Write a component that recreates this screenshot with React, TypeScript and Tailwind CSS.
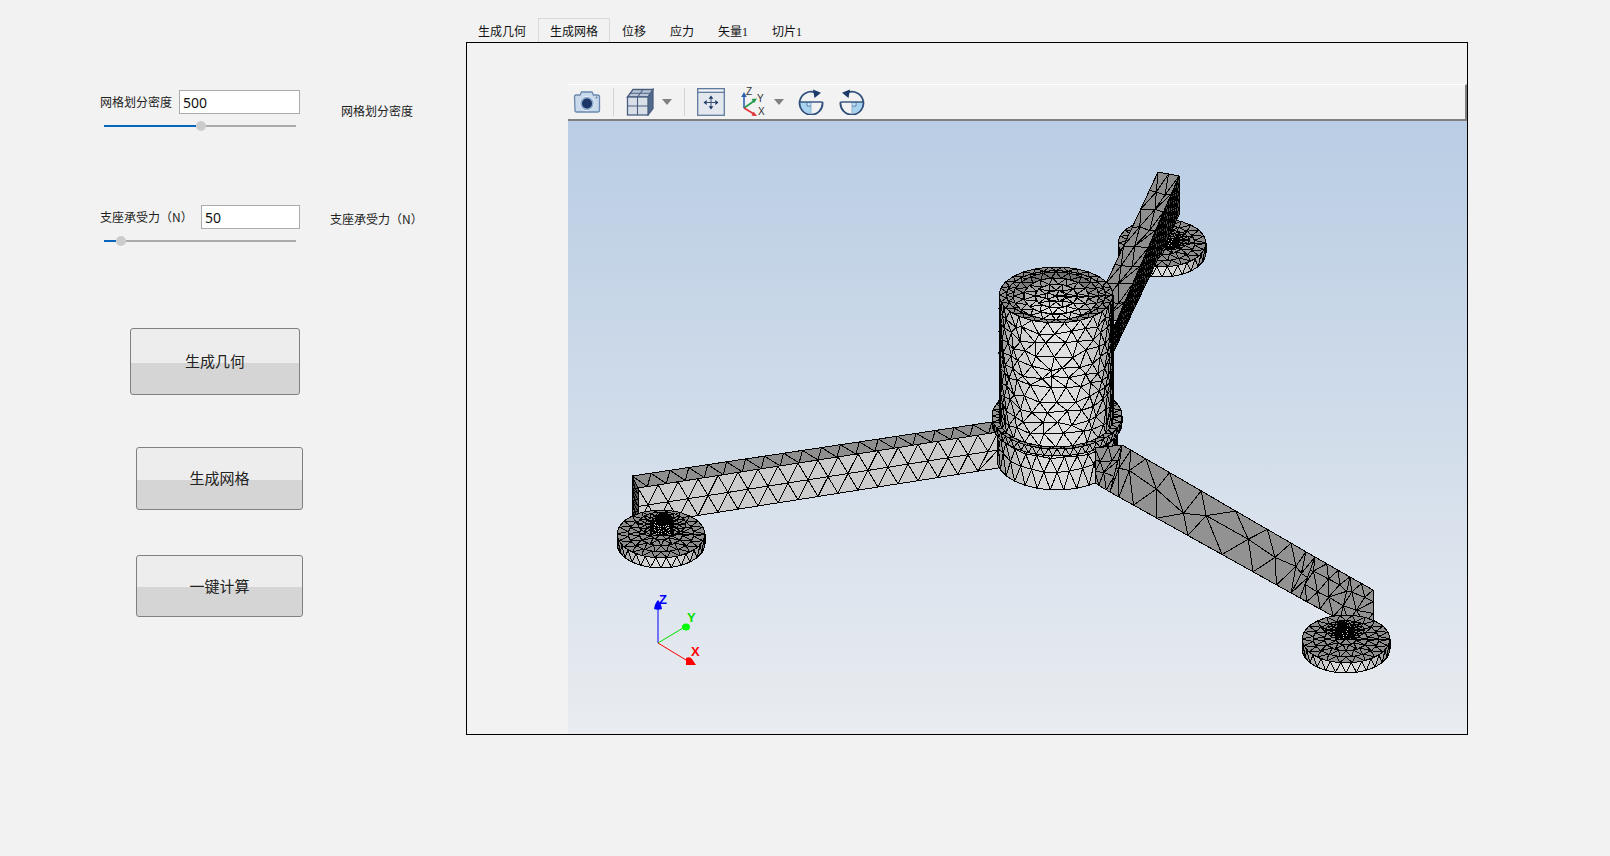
type P = [number, number]
type Tri = { pts: string; fill: string }

// deterministic jitter so the mesh is the same on every load
let seed = 42
const rnd = () => {
  seed = (seed * 16807) % 2147483647
  return seed / 2147483647 - 0.5
}

const gray = (v: number) => {
  const c = Math.round(Math.max(0, Math.min(255, v)))
  return `rgb(${c},${c},${c})`
}
const lerp = (a: number, b: number, t: number) => a + (b - a) * t

const tris: Tri[] = []
const pushTri = (a: P, b: P, c: P, fill: string) => {
  tris.push({ pts: `${a[0].toFixed(1)},${a[1].toFixed(1)} ${b[0].toFixed(1)},${b[1].toFixed(1)} ${c[0].toFixed(1)},${c[1].toFixed(1)}`, fill })
}

type SurfOpts = {
  nu: number
  nv: number
  fill: (u: number, v: number) => string
  jitter?: number
  uMap?: (u: number) => number
  vMap?: (v: number) => number
}

// staggered triangle strips over a parametric patch
const surface = (pos: (u: number, v: number) => P, o: SurfOpts) => {
  const { nu, nv, fill, jitter = 0, uMap = (u) => u, vMap = (v) => v } = o
  const rows: { u: number; v: number; p: P }[][] = []
  for (let j = 0; j <= nv; j++) {
    const us: number[] = []
    if (j % 2 === 0) for (let i = 0; i <= nu; i++) us.push(i / nu)
    else {
      us.push(0)
      for (let i = 0; i < nu; i++) us.push((i + 0.5) / nu)
      us.push(1)
    }
    const v0 = j / nv
    rows.push(
      us.map((u0, i) => {
        const inner = i > 0 && i < us.length - 1 && j > 0 && j < nv
        const u = uMap(u0 + (inner ? (rnd() * jitter) / nu : 0))
        const v = vMap(v0 + (inner ? (rnd() * jitter) / nv : 0))
        return { u, v, p: pos(u, v) }
      })
    )
  }
  for (let j = 0; j < nv; j++) {
    const A = rows[j]
    const B = rows[j + 1]
    let a = 0
    let b = 0
    while (a < A.length - 1 || b < B.length - 1) {
      const takeA = b === B.length - 1 || (a < A.length - 1 && A[a + 1].u <= B[b + 1].u)
      if (takeA) {
        pushTri(A[a].p, A[a + 1].p, B[b].p, fill((A[a].u + A[a + 1].u + B[b].u) / 3, (A[a].v + B[b].v) / 2))
        a++
      } else {
        pushTri(A[a].p, B[b + 1].p, B[b].p, fill((A[a].u + B[b + 1].u + B[b].u) / 3, (A[a].v + B[b].v) / 2))
        b++
      }
    }
  }
}

const quad = (a: P, b: P, c: P, d: P, o: SurfOpts) =>
  surface((u, v) => {
    const tx = lerp(a[0], b[0], u)
    const ty = lerp(a[1], b[1], u)
    const bx = lerp(d[0], c[0], u)
    const by = lerp(d[1], c[1], u)
    return [lerp(tx, bx, v), lerp(ty, by, v)]
  }, o)

const wall = (cx: number, cy: number, rx: number, ry: number, h: number, o: SurfOpts) =>
  surface((u, v) => {
    const t = Math.PI * u
    return [cx + rx * Math.cos(t), cy + ry * Math.sin(t) + h * v]
  }, o)

// concentric bands on a flat ellipse, fewer points on the inner bands
const polar = (cx: number, cy: number, rx: number, ry: number, ks: number[], nus: number[], fill: (u: number, k: number) => string) => {
  nus.forEach((nu, i) => {
    const k0 = ks[i]
    const k1 = ks[i + 1]
    surface(
      (u, v) => {
        const t = Math.PI * 2 * u
        const r = lerp(k0, k1, v)
        return [cx + rx * r * Math.cos(t), cy + ry * r * Math.sin(t)]
      },
      { nu, nv: 1, fill: (u) => fill(u, (k0 + k1) / 2) }
    )
  })
}

const flat = (v: number) => () => gray(v)
const litWall = (base: number, amp: number) => (u: number) => gray(base + amp * Math.pow(Math.sin(Math.PI * u), 0.9))

const disc = (cx: number, cy: number) => {
  wall(cx, cy, 44, 24, 10, { nu: 13, nv: 1, fill: litWall(85, 135) })
  polar(cx, cy, 44, 24, [1, 0.75, 0.5, 0.25, 0.01], [22, 18, 12, 6], flat(142))
}

const hole = (cx: number, cy: number, s: number) => {
  polar(cx, cy, 24 * s, 12 * s, [1, 0.7, 0.4], [18, 14], flat(140))
  wall(cx, cy - 6 * s, 10 * s, 5 * s, 12 * s, { nu: 9, nv: 5, fill: flat(225), jitter: 0.3 })
}

const ends = (u: number) => u - 0.1 * Math.sin(2 * Math.PI * u)

// back disc and arm
disc(1162, 243)
hole(1170, 240, 0.8)
quad([1179, 176], [1179, 215], [1113, 353], [1113, 329], { nu: 5, nv: 30, fill: flat(78) })
quad([1158, 172], [1179, 176], [1117, 320], [1089, 320], { nu: 2, nv: 8, fill: flat(142), jitter: 0.4 })

// left arm and foot
quad([632, 476], [638, 488], [638, 523], [632, 513], { nu: 1, nv: 6, fill: flat(90) })
quad([632, 476], [992, 422], [998, 432], [638, 488], { nu: 19, nv: 1, fill: flat(142) })
quad([638, 488], [998, 432], [998, 468], [638, 525], { nu: 18, nv: 2, fill: flat(204) })
disc(661, 534)
hole(662, 524, 1)

// hub
wall(1057, 420, 60, 30, 40, { nu: 14, nv: 3, fill: litWall(110, 110), jitter: 0.2, vMap: (v) => v * v * 0.6 + v * 0.4 })
wall(1057, 416, 65, 33, 7, { nu: 24, nv: 1, fill: litWall(85, 110) })
polar(1057, 416, 65, 33, [1, 0.85, 0.7], [34, 30], flat(150))

// shaft
wall(1056, 295, 57, 28, 124, {
  nu: 17,
  nv: 11,
  jitter: 0.55,
  uMap: (u) => Math.max(0, Math.min(1, ends(u))),
  fill: (u) => gray(70 + 155 * Math.pow(Math.sin(Math.PI * Math.min(1, u * 0.96 + 0.02)), 0.7)),
})
polar(1056, 295, 57, 28, [1, 0.87, 0.74], [26, 24], flat(142))
// recess in the top of the shaft
polar(1056, 296, 43, 24, [1, 0.76, 0.5, 0.25, 0.01], [20, 15, 10, 5], (u, k) => {
  const t = Math.PI * 2 * u
  return gray(192 + 58 * k * Math.sin(t) - 22 * Math.abs(k * Math.cos(t)) - (k > 0.8 ? 24 : 0))
})

// right arm and foot
quad([1095, 448], [1122, 445], [1110, 492], [1095, 483], { nu: 2, nv: 3, fill: flat(146), jitter: 0.3 })
quad([1122, 445], [1315, 557], [1300, 598], [1110, 492], { nu: 9, nv: 2, fill: flat(146), uMap: ends, jitter: 0.5 })
quad([1315, 557], [1350, 577], [1340, 620], [1300, 598], { nu: 3, nv: 3, fill: flat(146), jitter: 0.5 })
quad([1350, 577], [1373, 590], [1373, 625], [1340, 620], { nu: 2, nv: 3, fill: flat(146), jitter: 0.3 })
disc(1346, 639)
hole(1345, 630, 0.8)

const Caret = () => (
  <svg width="10" height="6" viewBox="0 0 10 6" className="shrink-0">
    <path d="M0 0h10L5 6z" fill="#7f7f7f" />
  </svg>
)

const Separator = () => <div className="w-px h-[28px] bg-[#d4d4d4] shrink-0" />

const CameraIcon = () => (
  <svg width="28" height="24" viewBox="0 0 28 24" className="shrink-0">
    <path d="M1.5 6.5q0-1.500 1.500-1.500h4l1.500-3h10.500l1.500 3h4q2 0 2 2v13q0 2-2 2h-21q-1.500 0-1.500-1.500z" fill="#c9d9ec" stroke="#6a88ad" strokeWidth="1.3" />
    <circle cx="14" cy="13.5" r="7.2" fill="#8fadd0" stroke="#e8eef6" />
    <circle cx="14" cy="13.5" r="5" fill="#1d3566" />
    <circle cx="23.5" cy="7.5" r="0.9" fill="#5a7aa0" />
  </svg>
)

const CubeIcon = () => (
  <svg width="28" height="28" viewBox="0 0 28 28" className="shrink-0">
    <path d="M1.5 9 7 1.500h20L22 9z" fill="#b9c6d6" stroke="#4a5f80" strokeWidth="1.3" />
    <path d="M22 9l5-7.500v19L22 27z" fill="#516a8c" stroke="#4a5f80" strokeWidth="1.3" />
    <rect x="1.5" y="9" width="20.5" height="18" fill="#d9dfe7" stroke="#4a5f80" strokeWidth="1.3" />
    <path d="M11.5 9v18M1.500 18h20.500M11.500 9 17 1.500M4 5.300h20" fill="none" stroke="#4a5f80" strokeWidth="1.1" />
  </svg>
)

const FitIcon = () => (
  <svg width="28" height="28" viewBox="0 0 28 28" className="shrink-0">
    <rect x="0.7" y="0.7" width="26.6" height="26.6" fill="#e3e8ef" stroke="#5f7a9c" strokeWidth="1.3" />
    <rect x="0.7" y="0.7" width="26.6" height="3.6" fill="#f4f6f9" stroke="#5f7a9c" strokeWidth="1.3" />
    <path d="M14 10v9M9.500 14.500h9" stroke="#3a4f72" strokeWidth="1" />
    <path d="M14 7.500l-2.400 3.200h4.800zM14 21.500l-2.400-3.200h4.800zM6.500 14.500l3.200-2.400v4.800zM21.500 14.500l-3.200-2.400v4.800z" fill="#1f3a68" />
  </svg>
)

const AxesIcon = () => (
  <svg width="30" height="30" viewBox="0 0 30 30" className="shrink-0">
    <path d="M3 21V9" stroke="#2c5fb0" strokeWidth="1.6" />
    <path d="M3 5 .2 10h5.600z" fill="#2c5fb0" />
    <path d="M3 21l10-7" stroke="#1f9a4a" strokeWidth="1.6" />
    <path d="M16 11.500l-5.500.6 2.700 3.900z" fill="#1f9a4a" />
    <path d="M3 21l10 6" stroke="#e0343a" strokeWidth="1.6" />
    <path d="M16 29l-5.500-.3 2.300-4z" fill="#e0343a" />
    <text x="5" y="7.500" fontSize="10" fill="#333" fontFamily="'Liberation Sans', sans-serif">Z</text>
    <text x="16" y="15" fontSize="10" fill="#333" fontFamily="'Liberation Sans', sans-serif">Y</text>
    <text x="17" y="28" fontSize="10" fill="#333" fontFamily="'Liberation Sans', sans-serif">X</text>
  </svg>
)

const RotateIcon = ({ flip }: { flip?: boolean }) => (
  <svg width="26" height="26" viewBox="0 0 26 26" className="shrink-0">
    <g transform={flip ? 'translate(26 0) scale(-1 1)' : undefined}>
      <path d="M1.500 13H13v11.500A11.500 11.500 0 0 1 1.500 13z" fill="#a8d3f0" />
      <path d="M13 13v11.500" stroke="#8db3d4" strokeWidth="1" fill="none" />
      <path d="M9 13v4h4" stroke="#3f6a96" strokeWidth="0.8" fill="#d7ecfa" />
      <path d="M17 3.400A11.500 11.500 0 1 0 24.500 13" fill="none" stroke="#2f4f7a" strokeWidth="1.8" />
      <path d="M1.500 13h23" stroke="#2f4f7a" strokeWidth="1.4" />
      <path d="M15 .5l8 3.200-6.500 5.300z" fill="#1f3a68" />
    </g>
  </svg>
)

const Slider = ({ fillClass }: { fillClass: string }) => (
  <div className="flex items-center w-[192px] h-[11px] ml-[4px] mt-[6px]">
    <div className={`h-[2px] bg-[#0a66bd] ${fillClass}`} />
    <div className="w-[10px] h-[10px] rounded-full bg-[#cccccc] shrink-0" />
    <div className="h-[2px] flex-1 bg-[#ababab]" />
  </div>
)

const FieldRow = ({ label, labelClass, inputClass, value, sideClass }: { label: string; labelClass: string; inputClass: string; value: string; sideClass: string }) => (
  <div className="flex items-start h-[24px]">
    <span className={`text-[12px] leading-[24px] text-[#222] whitespace-nowrap ${labelClass}`}>{label}</span>
    <input
      readOnly
      value={value}
      className={`h-[24px] border border-[#ababab] bg-white pl-[3px] text-[14px] text-[#111] outline-none font-['Noto_Sans',sans-serif] ${inputClass}`}
    />
    <span className={`text-[12px] leading-[18px] text-[#222] whitespace-nowrap ${sideClass}`}>{label}</span>
  </div>
)

const ActionButton = ({ text, className }: { text: string; className: string }) => (
  <button className={`flex items-center justify-center rounded-[3px] border border-[#808080] text-[15px] text-[#222] ${className}`}>
    {text}
  </button>
)

const tabs = [
  { label: '生成几何' },
  { label: '生成网格', active: true },
  { label: '位移' },
  { label: '应力' },
  { label: '矢量1' },
  { label: '切片1' },
]

export default function App() {
  return (
    <div className="flex w-[1610px] h-[856px] overflow-hidden bg-[#f2f2f2] font-['Noto_Sans_CJK_SC',sans-serif]">
      <aside className="w-[466px] shrink-0 pl-[100px] pt-[90px]">
        <FieldRow label="网格划分密度" labelClass="w-[79px]" inputClass="w-[121px]" value="500" sideClass="ml-[41px] mt-[12px]" />
        <Slider fillClass="w-[92px]" />

        <div className="mt-[74px]">
          <FieldRow label="支座承受力（N）" labelClass="w-[101px]" inputClass="w-[99px]" value="50" sideClass="ml-[30px] mt-[5px]" />
          <Slider fillClass="w-[12px]" />
        </div>

        <ActionButton
          text="生成几何"
          className="w-[170px] h-[67px] mt-[82px] ml-[30px] bg-[linear-gradient(#ededed_0%,#ededed_52%,#d5d5d5_52%,#d5d5d5_100%)]"
        />
        <ActionButton
          text="生成网格"
          className="w-[167px] h-[63px] mt-[52px] ml-[36px] bg-[linear-gradient(#ededed_0%,#ededed_52%,#d5d5d5_52%,#d5d5d5_100%)]"
        />
        <ActionButton
          text="一键计算"
          className="w-[167px] h-[62px] mt-[45px] ml-[36px] bg-[linear-gradient(#ededed_0%,#ededed_52%,#d5d5d5_52%,#d5d5d5_100%)]"
        />
      </aside>

      <main className="w-[1002px] shrink-0 pt-[18px]">
        <div className="flex h-[24px]">
          {tabs.map((t) => (
            <div
              key={t.label}
              className={`pt-[4px] text-[12px] leading-[18px] text-[#111] font-['Liberation_Serif','Noto_Sans_CJK_SC',serif] ${
                t.active ? 'px-[11px] border-x border-t border-[#d9d9d9]' : 'px-3 border-t border-transparent'
              }`}
            >
              {t.label}
            </div>
          ))}
        </div>

        <div className="h-[693px] border border-black pt-[41px] pl-[101px]">
          <div className="flex items-center h-[37px] bg-[#f2f2f2] border-t border-t-white border-b-2 border-b-[#808080] border-r-2 border-r-[#808080] pl-[5px]">
            <CameraIcon />
            <div className="ml-[12px]"><Separator /></div>
            <div className="ml-[12px]"><CubeIcon /></div>
            <div className="ml-[8px]"><Caret /></div>
            <div className="ml-[12px]"><Separator /></div>
            <div className="ml-[12px]"><FitIcon /></div>
            <div className="ml-[16px]"><AxesIcon /></div>
            <div className="ml-[3px]"><Caret /></div>
            <div className="ml-[14px]"><RotateIcon /></div>
            <div className="ml-[15px]"><RotateIcon flip /></div>
          </div>

          <div className="h-[613px] bg-linear-to-b from-[#b9cde4] to-[#e9ecf0]">
            <svg className="block w-full h-full" viewBox="568 121 899 613" shapeRendering="crispEdges">
              <g stroke="#000" strokeWidth="1" strokeLinejoin="round">
                {tris.map((t, i) => (
                  <polygon key={i} points={t.pts} fill={t.fill} />
                ))}
              </g>

              {/* dense spots around the mounting holes */}
              <ellipse cx="664" cy="519" rx="9" ry="6" fill="#000" />
              <path d="M651 520v17M672 520v17" stroke="#000" strokeWidth="2" />
              <ellipse cx="1342" cy="626" rx="5" ry="6" fill="#000" />
              <path d="M1336 628v12M1351 632l-4 8" stroke="#000" strokeWidth="1.5" />

              {/* view triad */}
              <g shapeRendering="auto">
                <path d="M658 643V607" stroke="#0000ff" strokeWidth="1" />
                <path d="M654 609q1-6 4-9q3 3 4 9q-4 1.500-8 0z" fill="#0000ff" />
                <path d="M658 643l25-15" stroke="#00e000" strokeWidth="1" />
                <ellipse cx="686" cy="627" rx="4" ry="3.500" fill="#00ff00" />
                <path d="M658 643l28 17" stroke="#ff0000" strokeWidth="1" />
                <path d="M686 658q4-2 6 1l4 6h-10z" fill="#ff0000" />
                <text x="659" y="604" fontSize="13" fontWeight="700" fill="#0000ff" fontFamily="'Liberation Sans', sans-serif">Z</text>
                <text x="687" y="622" fontSize="13" fontWeight="700" fill="#00e000" fontFamily="'Liberation Sans', sans-serif">Y</text>
                <text x="691" y="656" fontSize="13" fontWeight="700" fill="#ff0000" fontFamily="'Liberation Sans', sans-serif">X</text>
              </g>
            </svg>
          </div>
        </div>
      </main>
    </div>
  )
}
